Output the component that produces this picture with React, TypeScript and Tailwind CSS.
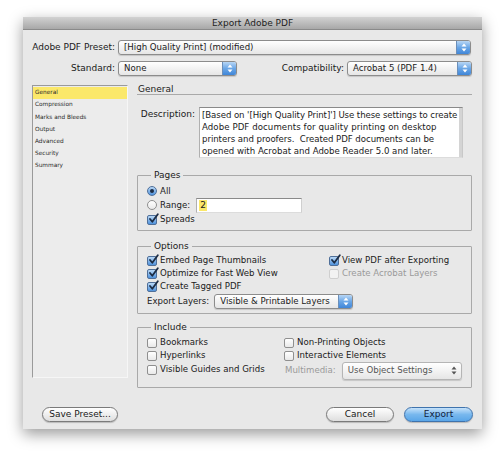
import React from 'react';

const font = { fontFamily: '"DejaVu Sans", "Liberation Sans", sans-serif' };

const Arrows = ({ disabled = false }: { disabled?: boolean }) => (
  <svg width="6" height="9" viewBox="0 0 6 9">
    <path d="M3 0.5 L5.5 3.5 L0.5 3.5 Z" fill={disabled ? '#555' : '#fff'} />
    <path d="M3 8.5 L5.5 5.5 L0.5 5.5 Z" fill={disabled ? '#555' : '#fff'} />
  </svg>
);

const Select = ({
  value,
  className = '',
  disabled = false,
}: {
  value: string;
  className?: string;
  disabled?: boolean;
}) => (
  <div
    className={`flex items-stretch rounded-[3px] border border-[#8c8c8c] bg-gradient-to-b from-white to-[#e6e6e6] shadow-[0_1px_1px_rgba(0,0,0,0.15)] ${className}`}
  >
    <div
      className={`flex-1 pl-[5px] flex items-center text-[8.6px] leading-none truncate ${
        disabled ? 'text-[#555]' : 'text-[#1a1a1a]'
      }`}
    >
      {value}
    </div>
    <div
      className={`w-[14px] flex items-center justify-center rounded-r-[2px] ${
        disabled ? '' : 'bg-gradient-to-b from-[#b7d6f5] via-[#6aa6e6] to-[#3f86d8] border-l border-[#6b8fba]'
      }`}
    >
      <Arrows disabled={disabled} />
    </div>
  </div>
);

const Check = ({ checked = false, disabled = false }: { checked?: boolean; disabled?: boolean }) => (
  <div
    className={`relative w-[10px] h-[10px] rounded-[2px] border shrink-0 ${
      checked
        ? 'border-[#4f6f99] bg-gradient-to-b from-[#b9d8f6] to-[#4e92dc]'
        : disabled
        ? 'border-[#cfcfcf] bg-[#f2f2f2]'
        : 'border-[#8f8f8f] bg-gradient-to-b from-white to-[#e9e9e9]'
    }`}
  >
    {checked && (
      <svg className="absolute left-[0px] top-[-3px]" width="11" height="11" viewBox="0 0 11 11">
        <path d="M2 6 L4.3 8.8 L9.8 1.2" stroke="#1c2c44" strokeWidth="1.8" fill="none" strokeLinecap="round" strokeLinejoin="round" />
      </svg>
    )}
  </div>
);

const Radio = ({ on = false }: { on?: boolean }) => (
  <div
    className={`w-[10px] h-[10px] rounded-full border shrink-0 flex items-center justify-center ${
      on ? 'border-[#4f6f99] bg-gradient-to-b from-[#b9d8f6] to-[#4e92dc]' : 'border-[#8f8f8f] bg-gradient-to-b from-white to-[#e9e9e9]'
    }`}
  >
    {on && <div className="w-[4px] h-[4px] rounded-full bg-[#1c2c44]" />}
  </div>
);

const Item = ({
  label,
  checked,
  disabled,
  className = '',
}: {
  label: string;
  checked?: boolean;
  disabled?: boolean;
  className?: string;
}) => (
  <div className={`flex items-center gap-[3px] h-[13px] ${className}`}>
    <Check checked={checked} disabled={disabled} />
    <span className={`text-[8.6px] leading-none ${disabled ? 'text-[#9a9a9a]' : 'text-[#1a1a1a]'}`}>{label}</span>
  </div>
);

const Group = ({ title, children, className = '' }: { title: string; children: React.ReactNode; className?: string }) => (
  <fieldset className={`border border-[#a9a9a9] rounded-[1px] px-[9px] pb-[5px] ${className}`}>
    <legend className="ml-[4px] px-[3px] text-[9px] leading-[10px] text-[#1a1a1a]">{title}</legend>
    {children}
  </fieldset>
);

const Button = ({ label, primary = false, className = '' }: { label: string; primary?: boolean; className?: string }) => (
  <div
    className={`h-[15px] rounded-full border flex items-center justify-center text-[9px] leading-none shadow-[0_1px_1px_rgba(0,0,0,0.2)] ${
      primary
        ? 'border-[#3f73ad] bg-gradient-to-b from-[#c5e2fa] via-[#78b8ee] to-[#5aa6e8] text-[#10203a]'
        : 'border-[#7a7a7a] bg-gradient-to-b from-white to-[#dedede] text-[#1a1a1a]'
    } ${className}`}
  >
    {label}
  </div>
);

const sections = ['General', 'Compression', 'Marks and Bleeds', 'Output', 'Advanced', 'Security', 'Summary'];

export default function App() {
  return (
    <div className="w-[500px] h-[457px] bg-white pt-[17px] pl-[23px] overflow-hidden" style={font}>
      <div className="w-[459px] h-[412px] bg-[#e8e8e8] shadow-[0_5px_14px_rgba(0,0,0,0.4)] flex flex-col">
        {/* title bar */}
        <div className="h-[13px] bg-gradient-to-b from-[#d2d2d2] to-[#a8a8a8] border-b border-[#8a8a8a] flex items-center justify-center text-[9px] leading-none text-[#222]">
          Export Adobe PDF
        </div>

        {/* preset */}
        <div className="mt-[10px] flex items-center h-[15px]">
          <div className="w-[92px] text-right text-[9px] leading-none text-[#1a1a1a]">Adobe PDF Preset:</div>
          <Select value="[High Quality Print] (modified)" className="ml-[3px] w-[353px] h-[15px]" />
        </div>

        {/* standard + compatibility */}
        <div className="mt-[6px] flex items-center h-[15px]">
          <div className="w-[92px] text-right text-[9px] leading-none text-[#1a1a1a]">Standard:</div>
          <Select value="None" className="ml-[3px] w-[119px] h-[15px]" />
          <div className="flex-1 text-right pr-[3px] text-[9px] leading-none text-[#1a1a1a]">Compatibility:</div>
          <Select value="Acrobat 5 (PDF 1.4)" className="w-[125px] h-[15px] mr-[10px]" />
        </div>

        {/* main */}
        <div className="mt-[9px] flex pl-[9px]">
          <div className="w-[96px] h-[293px] bg-[#ececec] border border-t-[#9a9a9a] border-l-[#9a9a9a] border-r-[#f6f6f6] border-b-[#f6f6f6] pt-[1px]">
            {sections.map((s, i) => (
              <div
                key={s}
                className={`h-[12.2px] flex items-center pl-[2px] text-[5.8px] leading-none text-[#2a2a2a] ${
                  i === 0 ? 'bg-[#fbe86a]' : ''
                }`}
              >
                {s}
              </div>
            ))}
          </div>

          <div className="ml-[9px] w-[335px]">
            <div className="h-[10px] border-b border-[#a9a9a9] pl-[1px] text-[9px] leading-[8px] text-[#1a1a1a]">General</div>

            <div className="mt-[12px] flex">
              <div className="w-[58px] text-right pt-[3px] text-[9px] leading-none text-[#1a1a1a]">Description:</div>
              <div className="ml-[4px] w-[264px] h-[51px] bg-white border border-t-[#8a8a8a] border-l-[#b0b0b0] border-r-[#c8c8c8] border-b-[#dcdcdc] flex">
                <div className="flex-1 min-w-0 pl-[2px] pt-[1px] text-[8.6px] leading-[12px] whitespace-nowrap text-[#1a1a1a]">
                  <div className="tracking-[-0.08px]">[Based on '[High Quality Print]'] Use these settings to create</div>
                  <div className="tracking-[0.08px]">Adobe PDF documents for quality printing on desktop</div>
                  <div className="tracking-[-0.05px]">printers and proofers.&nbsp; Created PDF documents can be</div>
                  <div className="tracking-[0px]">opened with Acrobat and Adobe Reader 5.0 and later.</div>
                </div>
                <div className="w-[3px] bg-[#d4d4d4]" />
              </div>
            </div>

            <Group title="Pages" className="mt-[12px] h-[61px]">
              <div className="pt-[5px] flex flex-col">
                <div className="flex items-center gap-[3px] h-[12px]">
                  <Radio on />
                  <span className="text-[8.6px] leading-none text-[#1a1a1a]">All</span>
                </div>
                <div className="flex items-center gap-[3px] h-[16px]">
                  <Radio />
                  <span className="text-[8.6px] leading-none text-[#1a1a1a]">Range:</span>
                  <div className="ml-[3px] w-[106px] h-[15px] bg-white border border-t-[#8a8a8a] border-l-[#b0b0b0] border-r-[#cfcfcf] border-b-[#dcdcdc] flex items-center pl-[2px]">
                    <span className="bg-[#fbe86a] text-[9px] leading-[11px] px-[1px] text-[#1a1a1a]">2</span>
                  </div>
                </div>
                <Item label="Spreads" checked className="h-[12px]" />
              </div>
            </Group>

            <Group title="Options" className="mt-[10px] h-[73px]">
              <div className="pt-[3px] grid grid-cols-[182px_1fr]">
                <Item label="Embed Page Thumbnails" checked />
                <Item label="View PDF after Exporting" checked />
                <Item label="Optimize for Fast Web View" checked />
                <Item label="Create Acrobat Layers" disabled />
                <Item label="Create Tagged PDF" checked />
                <div />
              </div>
              <div className="flex items-center h-[16px]">
                <span className="text-[8.6px] leading-none text-[#1a1a1a]">Export Layers:</span>
                <Select value="Visible & Printable Layers" className="ml-[5px] w-[139px] h-[15px]" />
              </div>
            </Group>

            <Group title="Include" className="mt-[8px] h-[66px]">
              <div className="pt-[4px] grid grid-cols-[137px_1fr]">
                <Item label="Bookmarks" />
                <Item label="Non-Printing Objects" />
                <Item label="Hyperlinks" />
                <Item label="Interactive Elements" />
                <Item label="Visible Guides and Grids" className="h-[15px]" />
                <div className="flex items-center h-[15px] mt-[1px]">
                  <span className="pl-[1px] text-[8.6px] leading-none text-[#9a9a9a]">Multimedia:</span>
                  <Select value="Use Object Settings" disabled className="ml-[6px] w-[120px] h-[18px] border-[#b5b5b5]" />
                </div>
              </div>
            </Group>
          </div>
        </div>

        {/* buttons */}
        <div className="mt-[19px] flex items-center pl-[19px] pr-[9px]">
          <Button label="Save Preset..." className="w-[76px]" />
          <div className="flex-1" />
          <Button label="Cancel" className="w-[68px]" />
          <Button label="Export" primary className="ml-[10px] w-[69px]" />
        </div>
      </div>
    </div>
  );
}
